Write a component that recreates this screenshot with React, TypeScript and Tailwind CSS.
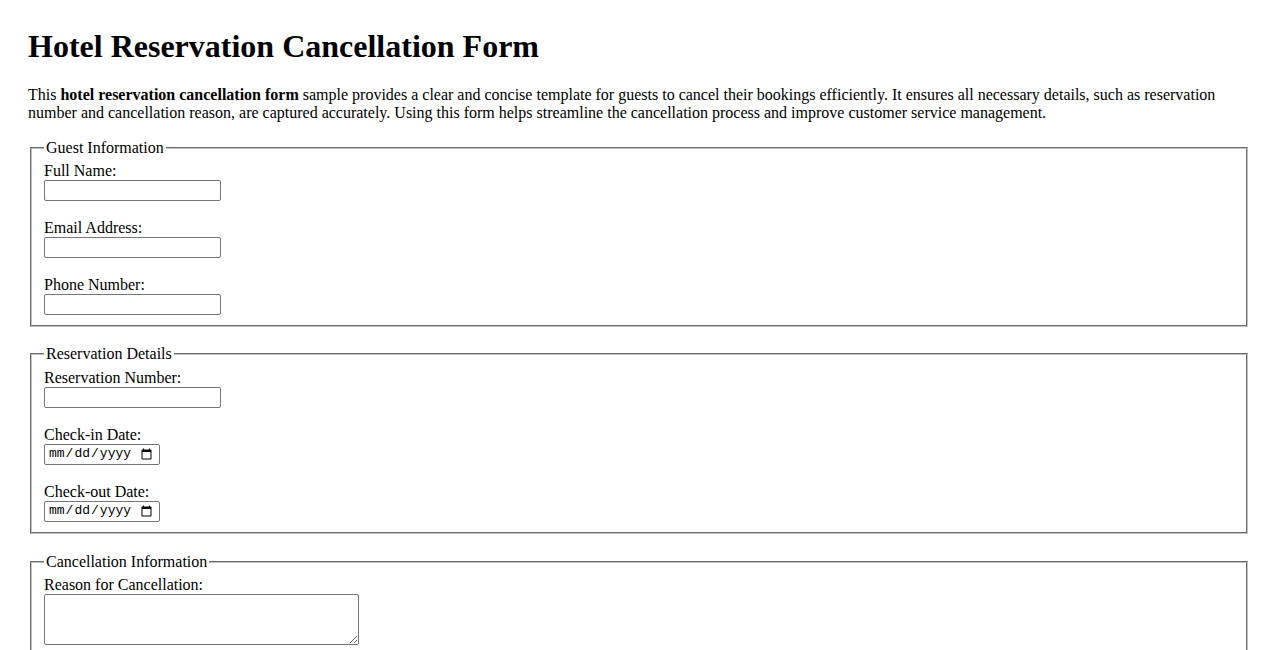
const inputCls = 'block w-[177px] h-[21px] border border-[#767676] rounded-[2px] bg-white px-[2px] text-[13px] font-["Liberation_Sans",sans-serif]';
const dateCls = 'block w-[116px] h-[21px] border border-[#767676] rounded-[2px] bg-white pl-[3px] pr-[4px] text-[13px] font-["Liberation_Mono",monospace] text-black';
const fieldsetCls = 'mx-[2px] border-2 [border-style:groove] border-[#c0c0c0] px-[12px] pt-[5px] pb-[10px]';

function Field({ label, id, type = 'text' }: { label: string; id: string; type?: string }) {
  return (
    <div className="mb-[18px] last:mb-0">
      <label htmlFor={id} className="block leading-[18px]">
        {label}
      </label>
      <input id={id} type={type} className={type === 'date' ? dateCls : inputCls} />
    </div>
  );
}

export default function App() {
  return (
    <div className="min-h-screen bg-white text-black font-['Liberation_Serif',serif] text-[16px] px-[28px] pt-[28px] pb-10">
      <h1 className="text-[32px] font-bold leading-[37px]">Hotel Reservation Cancellation Form</h1>

      <p className="mt-[21px] mb-[16px] leading-[18.4px]">
        This <b>hotel reservation cancellation form</b> sample provides a clear and concise template for guests to
        cancel their bookings efficiently. It ensures all necessary details, such as reservation number and
        cancellation reason, are captured accurately. Using this form helps streamline the cancellation process and
        improve customer service management.
      </p>

      <form>
        {/* Guest details */}
        <fieldset className={fieldsetCls}>
          <legend className="px-[2px] leading-[18.4px]">Guest Information</legend>
          <Field label="Full Name:" id="fullName" />
          <Field label="Email Address:" id="email" type="text" />
          <Field label="Phone Number:" id="phone" type="text" />
        </fieldset>

        <fieldset className={`${fieldsetCls} mt-[18px]`}>
          <legend className="px-[2px] leading-[18.4px]">Reservation Details</legend>
          <Field label="Reservation Number:" id="resNumber" />
          <Field label="Check-in Date:" id="checkIn" type="date" />
          <Field label="Check-out Date:" id="checkOut" type="date" />
        </fieldset>

        <fieldset className={`${fieldsetCls} mt-[19px]`}>
          <legend className="px-[2px] leading-[18.4px]">Cancellation Information</legend>
          <label htmlFor="reason" className="block leading-[18px]">
            Reason for Cancellation:
          </label>
          <textarea
            id="reason"
            rows={3}
            className="block w-[315px] h-[51px] border border-[#767676] rounded-[2px] bg-white px-[2px] text-[13px] font-['Liberation_Mono',monospace]"
          />
        </fieldset>

        <div className="mt-[18px]">
          <button
            type="submit"
            className="border border-[#767676] rounded-[2px] bg-[#efefef] px-[6px] py-[1px] text-[13px] font-['Liberation_Sans',sans-serif]"
          >
            Submit Cancellation
          </button>
        </div>
      </form>
    </div>
  );
}
